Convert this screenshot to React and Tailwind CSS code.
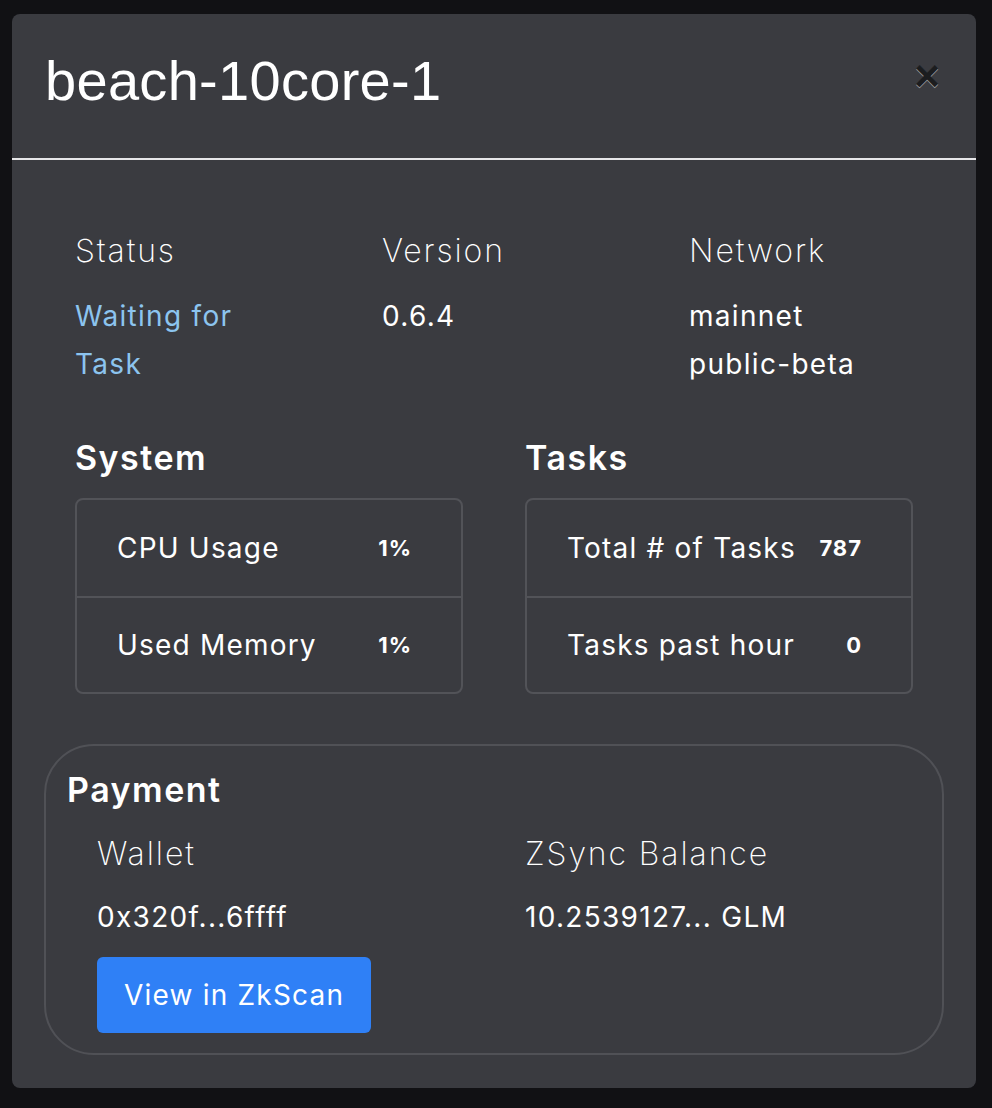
const INTER = "font-['Inter','Noto_Sans',sans-serif]";

const SYSTEM = [
  { l: 'CPU Usage', v: '1%' },
  { l: 'Used Memory', v: '1%' },
];

const TASKS = [
  { l: 'Total # of Tasks', v: '787' },
  { l: 'Tasks past hour', v: '0' },
];

const LABEL = 'text-[32px] font-extralight leading-[48px] tracking-[1.9px] text-white';
const VALUE = 'text-[28px] leading-[48px] tracking-[1.3px]';
const HEAD = 'text-[34px] font-semibold leading-[48px] tracking-[1.5px] text-white';

function StatBox({ rows }) {
  return (
    <div className="rounded-[8px] border-2 border-[#525358]">
      {rows.map((r, i) => (
        <div
          key={r.l}
          className={`flex h-[96px] items-center justify-between pl-[40px] pr-[49px] ${i > 0 ? 'border-t-2 border-[#525358]' : ''}`}
        >
          <span className="text-[28px] leading-[40px] tracking-[1.2px] text-white">{r.l}</span>
          <span className="text-[22px] font-bold leading-[30px] tracking-[1px] text-white">{r.v}</span>
        </div>
      ))}
    </div>
  );
}

export default function App() {
  return (
    <div className={`min-h-screen bg-[#111114] pt-[14px] pr-[16px] pb-[20px] pl-[12px] ${INTER}`}>
      <div className="rounded-[8px] bg-[#3a3b40]">
        {/* header */}
        <div className="flex h-[146px] items-start justify-between border-b-2 border-[#e6e6e8] pl-[33px] pr-[36px] pt-[33px]">
          <h1 className="font-['Liberation_Sans','Arial',sans-serif] text-[56px] leading-[67px] tracking-[0.3px] text-white">beach-10core-1</h1>
          <button className="mt-[4px] font-['Liberation_Sans','Arial',sans-serif] text-[44px] font-bold leading-[50px] text-black opacity-50 [text-shadow:0_1px_0_#fff]">
            ×
          </button>
        </div>

        {/* body */}
        <div className="px-[32px] pb-[33px] pt-[67px]">
          <div className="grid grid-cols-[307px_307px_1fr] pl-[31px]">
            <div>
              <p className={LABEL}>Status</p>
              <p className={`mt-[17px] w-[200px] ${VALUE} text-[#8cc4ef]`}>Waiting for Task</p>
            </div>
            <div>
              <p className={LABEL}>Version</p>
              <p className={`mt-[17px] ${VALUE} text-white`}>0.6.4</p>
            </div>
            <div>
              <p className={LABEL}>Network</p>
              <p className={`mt-[17px] ${VALUE} text-white`}>
                mainnet
                <br />
                public-beta
              </p>
            </div>
          </div>

          <div className="mt-[46px] grid grid-cols-[388px_388px] gap-x-[62px] pl-[31px]">
            <div>
              <h2 className={HEAD}>System</h2>
              <div className="mt-[16px]">
                <StatBox rows={SYSTEM} />
              </div>
            </div>
            <div>
              <h2 className={HEAD}>Tasks</h2>
              <div className="mt-[16px]">
                <StatBox rows={TASKS} />
              </div>
            </div>
          </div>

          {/* payment */}
          <div className="mt-[50px] rounded-[50px] border-2 border-[#505156] pb-[20px] pl-[21px] pt-[20px]">
            <h2 className={HEAD}>Payment</h2>
            <div className="mt-[16px] grid grid-cols-[428px_1fr] pl-[30px]">
              <div>
                <p className={LABEL}>Wallet</p>
                <p className={`mt-[15px] ${VALUE} text-white`}>0x320f...6ffff</p>
                <button className="mt-[16px] h-[76px] rounded-[6px] bg-[#2f80f6] px-[27px] text-[28px] leading-[40px] tracking-[1.2px] text-white">
                  View in ZkScan
                </button>
              </div>
              <div>
                <p className={LABEL}>ZSync Balance</p>
                <p className={`mt-[15px] ${VALUE} text-white`}>10.2539127... GLM</p>
              </div>
            </div>
          </div>
        </div>
      </div>
    </div>
  );
}
